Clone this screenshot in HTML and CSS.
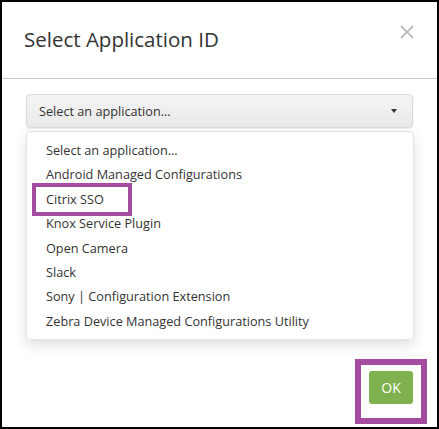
FILE: index.html
```html
<!DOCTYPE html>
<html>
<head>
<meta charset="utf-8">
<link rel="stylesheet" href="styles.css">
</head>
<body>
<div class="dialog">
  <div class="header">
    <h1 class="title">Select Application ID</h1>
    <svg class="close" width="14" height="14" viewBox="0 0 14 14"><path d="M1 1 L13 13 M13 1 L1 13" stroke="#bdbdbd" stroke-width="1.8" fill="none"/></svg>
  </div>
  <div class="content">
    <div class="select">
      <span class="select-text">Select an application...</span>
      <span class="caret"></span>
    </div>
    <ul class="list">
      <li class="item">Select an application...</li>
      <li class="item">Android Managed Configurations</li>
      <li class="item marked">Citrix SSO<span class="mark mark-item"></span></li>
      <li class="item">Knox Service Plugin</li>
      <li class="item">Open Camera</li>
      <li class="item">Slack</li>
      <li class="item">Sony | Configuration Extension</li>
      <li class="item">Zebra Device Managed Configurations Utility</li>
    </ul>
  </div>
  <div class="footer">
    <button class="ok">OK<span class="mark mark-ok"></span></button>
  </div>
</div>
</body>
</html>
```
FILE: styles.css
```css
html, body {
  margin: 0;
  padding: 0;
  background: #fff;
}
.dialog {
  width: 439px;
  height: 429px;
  box-sizing: border-box;
  border: 2px solid #000;
  background: #fff;
  font-family: "Open Sans", "Noto Sans", sans-serif;
  color: #333;
  display: flex;
  flex-direction: column;
}
.header {
  height: 76px;
  border-bottom: 1px solid #c8c8c8;
  display: flex;
  justify-content: space-between;
  align-items: flex-start;
  padding: 0 23px 0 22px;
}
.title {
  margin: 23px 0 0;
  font-size: 20.5px;
  line-height: 28px;
  font-weight: 400;
  color: #333;
}
.close {
  margin-top: 23px;
}
.content {
  padding: 15px 24px 0;
}
.select {
  height: 34px;
  box-sizing: border-box;
  border: 1px solid #dadada;
  border-radius: 4px;
  background: linear-gradient(#f4f4f4, #e9e9e9);
  box-shadow: 0 1px 2px rgba(0,0,0,0.08);
  display: flex;
  align-items: center;
  justify-content: space-between;
  padding: 0 15px 0 12px;
  font-size: 12.7px;
}
.caret {
  width: 0;
  height: 0;
  border-left: 3.5px solid transparent;
  border-right: 3.5px solid transparent;
  border-top: 4px solid #333;
}
.list {
  list-style: none;
  margin: 3px 0 0;
  padding: 6px 0 6px;
  border: 1px solid #e4e4e4;
  border-radius: 4px;
  background: #fff;
  box-shadow: 0 5px 14px rgba(0,0,0,0.13);
  font-size: 12.7px;
  width: 386px;
}
.item {
  position: relative;
  height: 24.4px;
  line-height: 24.4px;
  padding-left: 19px;
}
.mark {
  position: absolute;
  border-style: solid;
  border-color: #a34ca0;
  box-sizing: border-box;
}
.mark-item {
  left: 5px;
  top: -4px;
  width: 100px;
  height: 33px;
  border-width: 4px;
}
.footer {
  display: flex;
  justify-content: flex-end;
  padding: 31px 24px 0;
}
.ok {
  position: relative;
  width: 44px;
  height: 33px;
  border: none;
  border-radius: 3px;
  background: #7fb24e;
  color: #fff;
  font-family: "Open Sans", "Noto Sans", sans-serif;
  font-size: 14px;
  font-weight: 400;
  padding: 0;
}
.mark-ok {
  left: -14px;
  top: -12px;
  width: 72px;
  height: 65px;
  border-width: 6px;
}
```
